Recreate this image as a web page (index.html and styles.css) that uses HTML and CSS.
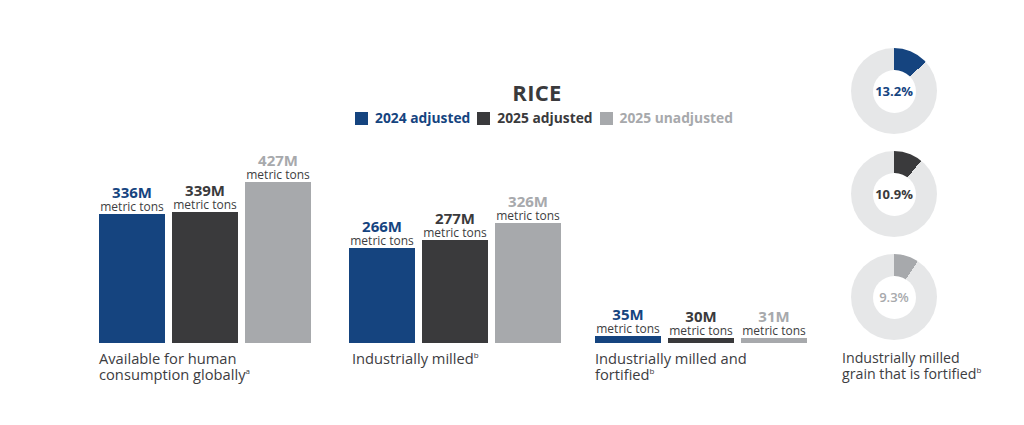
FILE: index.html
```html
<!DOCTYPE html>
<html lang="en">
<head>
<meta charset="utf-8">
<title>Rice</title>
<link rel="stylesheet" href="styles.css">
</head>
<body>
<main class="page">
  <section class="chart">
    <header class="head">
      <h1 class="title">RICE</h1>
      <ul class="legend">
        <li class="legend-item c-blue"><span class="swatch bg-blue"></span>2024 adjusted</li>
        <li class="legend-item c-dark"><span class="swatch bg-dark"></span>2025 adjusted</li>
        <li class="legend-item c-grey"><span class="swatch bg-grey"></span>2025 unadjusted</li>
      </ul>
    </header>
    <div class="groups">
      <div class="group g1">
        <div class="bars">
          <div class="col">
            <div class="val c-blue">336M</div><div class="unit">metric tons</div>
            <div class="bar bg-blue" style="height:129px"></div>
          </div>
          <div class="col">
            <div class="val c-dark">339M</div><div class="unit">metric tons</div>
            <div class="bar bg-dark" style="height:131px"></div>
          </div>
          <div class="col">
            <div class="val c-grey">427M</div><div class="unit">metric tons</div>
            <div class="bar bg-grey" style="height:161px"></div>
          </div>
        </div>
        <p class="label">Available for human<br>consumption globally<sup>a</sup></p>
      </div>
      <div class="group g2">
        <div class="bars">
          <div class="col">
            <div class="val c-blue">266M</div><div class="unit">metric tons</div>
            <div class="bar bg-blue" style="height:95px"></div>
          </div>
          <div class="col">
            <div class="val c-dark">277M</div><div class="unit">metric tons</div>
            <div class="bar bg-dark" style="height:103px"></div>
          </div>
          <div class="col">
            <div class="val c-grey">326M</div><div class="unit">metric tons</div>
            <div class="bar bg-grey" style="height:120px"></div>
          </div>
        </div>
        <p class="label indent">Industrially milled<sup>b</sup></p>
      </div>
      <div class="group g3">
        <div class="bars">
          <div class="col">
            <div class="val c-blue">35M</div><div class="unit">metric tons</div>
            <div class="bar bg-blue" style="height:7px"></div>
          </div>
          <div class="col">
            <div class="val c-dark">30M</div><div class="unit">metric tons</div>
            <div class="bar bg-dark" style="height:5px"></div>
          </div>
          <div class="col">
            <div class="val c-grey">31M</div><div class="unit">metric tons</div>
            <div class="bar bg-grey" style="height:5px"></div>
          </div>
        </div>
        <p class="label">Industrially milled and<br>fortified<sup>b</sup></p>
      </div>
    </div>
  </section>
  <aside class="donuts">
    <div class="donut ring-blue" style="--p:13.2%"><div class="hole c-blue">13.2%</div></div>
    <div class="donut ring-dark" style="--p:10.9%"><div class="hole c-dark">10.9%</div></div>
    <div class="donut ring-grey" style="--p:9.3%"><div class="hole c-grey light">9.3%</div></div>
    <p class="label dlabel">Industrially milled<br>grain that is fortified<sup>b</sup></p>
  </aside>
</main>
</body>
</html>
```

FILE: styles.css
```css
* { box-sizing: border-box; }
html, body { margin: 0; padding: 0; background: #ffffff; }
body {
  font-family: "Open Sans", "Liberation Sans", sans-serif;
  color: #3d3d3f;
  width: 1024px;
  height: 425px;
  overflow: hidden;
}
.page {
  display: flex;
  padding-left: 99px;
  height: 425px;
}
.chart {
  display: flex;
  flex-direction: column;
  padding-top: 77px;
  width: 743px;
}
.head {
  display: flex;
  flex-direction: column;
  align-items: center;
  padding-left: 139px;
  margin-bottom: 25px;
}
.title {
  margin: 0 6px 0 0;
  font-size: 22px;
  line-height: 30px;
  font-weight: 700;
  color: #3a3a3c;
  letter-spacing: 0.3px;
}
.legend {
  list-style: none;
  margin: 2px 0 0 8px;
  padding: 0;
  display: flex;
  gap: 7px;
  font-size: 13.8px;
  line-height: 18px;
  font-weight: 700;
}
.legend-item {
  display: flex;
  align-items: center;
  gap: 7px;
}
.swatch {
  display: block;
  width: 13px;
  height: 13px;
}
.c-blue { color: #15447f; }
.c-dark { color: #3a3a3c; }
.c-grey { color: #a7a9ac; }
.bg-blue { background: #15447f; }
.bg-dark { background: #3a3a3c; }
.bg-grey { background: #a7a9ac; }

.groups {
  display: flex;
  gap: 36px;
}
.group {
  display: flex;
  flex-direction: column;
  width: 212px;
}
.g2 { margin-left: 2px; }
.g3 { margin-left: -2px; }
.bars {
  display: flex;
  align-items: flex-end;
  gap: 7px;
  height: 191px;
}
.col {
  width: 66px;
  display: flex;
  flex-direction: column;
  align-items: center;
}
.val {
  font-size: 15px;
  line-height: 16px;
  font-weight: 700;
  white-space: nowrap;
}
.unit {
  font-size: 12px;
  line-height: 14px;
  white-space: nowrap;
  color: #3d3d3f;
}
.bar {
  width: 66px;
}
.label {
  margin: 7px 0 0;
  font-size: 14.7px;
  line-height: 16px;
  color: #3d3d3f;
}
.label.indent { padding-left: 3px; }
sup {
  font-size: 8px;
  line-height: 0;
  vertical-align: 6px;
}

.donuts {
  padding-top: 48px;
  display: flex;
  flex-direction: column;
  gap: 17px;
}
.donut {
  width: 86px;
  height: 86px;
  margin-left: 9px;
  border-radius: 50%;
  display: flex;
  align-items: center;
  justify-content: center;
}
.ring-blue { background: conic-gradient(#15447f 0 var(--p), #e6e7e8 var(--p) 100%); }
.ring-dark { background: conic-gradient(#3a3a3c 0 var(--p), #e6e7e8 var(--p) 100%); }
.ring-grey { background: conic-gradient(#a7a9ac 0 var(--p), #e6e7e8 var(--p) 100%); }
.hole {
  width: 43px;
  height: 43px;
  border-radius: 50%;
  background: #ffffff;
  display: flex;
  align-items: center;
  justify-content: center;
  font-size: 13px;
  font-weight: 700;
  white-space: nowrap;
}
.hole.light { font-weight: 600; }
.dlabel {
  margin-top: -7px;
  font-size: 14.2px;
  white-space: nowrap;
}
```
